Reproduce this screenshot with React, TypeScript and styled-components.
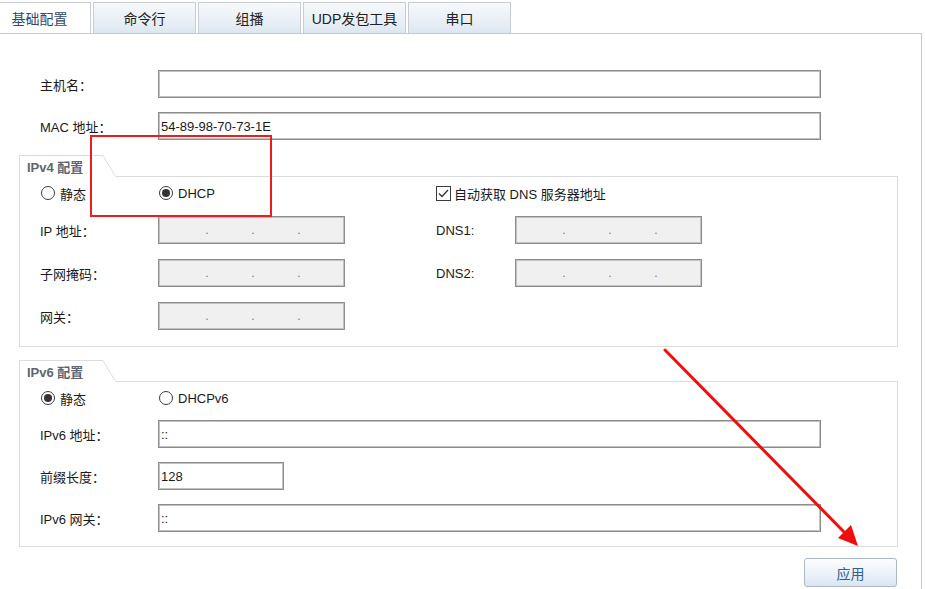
import React from "react";
import styled, { createGlobalStyle } from "styled-components";

const GlobalStyle = createGlobalStyle`
  html, body {
    margin: 0;
    padding: 0;
    background: #fff;
  }
  body {
    font-family: "Liberation Sans", "Noto Sans CJK SC", sans-serif;
    font-size: 13px;
    color: #1a1a1a;
  }
`;

const Page = styled.div`
  position: relative;
  width: 925px;
  height: 589px;
  overflow: hidden;
`;

const TabBar = styled.div`
  display: flex;
  gap: 2px;
  padding-top: 2px;
  width: 922px;
  border-bottom: 1px solid #c6c9cd;
`;

const Tab = styled.div<{ $active?: boolean }>`
  box-sizing: border-box;
  width: 103px;
  height: 31px;
  display: flex;
  align-items: center;
  justify-content: center;
  font-size: 14px;
  border: 1px solid #c9cdd2;
  border-bottom: none;
  color: ${(p) => (p.$active ? "#34496a" : "#222")};
  background: ${(p) =>
    p.$active ? "#fff" : "linear-gradient(#f7f9fb, #e6edf5 70%, #dde6f0)"};
  &:first-child {
    margin-left: -12px;
  }
`;

const Panel = styled.div`
  box-sizing: border-box;
  width: 922px;
  height: 555px;
  border-right: 1px solid #c6c9cd;
  padding-top: 36px;
`;

const TopFields = styled.div`
  display: flex;
  flex-direction: column;
  gap: 14px;
  margin-bottom: 15px;
`;

const Field = styled.div`
  display: grid;
  grid-template-columns: 118px auto;
  align-items: center;
  height: 28px;
  padding-left: 40px;
`;

const Label = styled.span`
  white-space: nowrap;
`;

const TextInput = styled.input<{ $width: number }>`
  box-sizing: border-box;
  width: ${(p) => p.$width}px;
  height: 28px;
  margin: 0;
  padding: 0 2px;
  border: 1px solid #8c8c8c;
  box-shadow: inset 0 0 0 1px #c2c2c2;
  font: inherit;
  font-size: 13px;
  color: #1a1a1a;
  background: #fff;
  outline: none;
`;

const IpBox = styled.div`
  box-sizing: border-box;
  width: 187px;
  height: 28px;
  display: flex;
  align-items: center;
  gap: 42px;
  padding-left: 46px;
  border: 1px solid #8c8c8c;
  box-shadow: inset 0 0 0 1px #c2c2c2;
  background: #f0f0f0;
  color: #7a7a7a;
  font-size: 12px;
`;

const Dot = styled.span`
  width: 4px;
  text-align: center;
`;

const Group = styled.div<{ $gap?: number }>`
  margin-left: 19px;
  width: 879px;
  margin-top: ${(p) => p.$gap ?? 0}px;
`;

const GroupHead = styled.div`
  display: flex;
  height: 22px;
`;

const LegendTab = styled.div`
  box-sizing: border-box;
  width: 84px;
  height: 22px;
  border-top: 1px solid #dcdcdc;
  border-left: 1px solid #dcdcdc;
  padding-left: 7px;
  display: flex;
  align-items: center;
  font-weight: bold;
  color: #5d6670;
`;

const Slant = styled.svg`
  display: block;
  flex: none;
`;

const HeadRest = styled.div`
  flex: 1;
  border-bottom: 1px solid #dcdcdc;
`;

const GroupBody = styled.div<{ $cols: string; $rowGap: number; $pb: number }>`
  display: grid;
  grid-template-columns: ${(p) => p.$cols};
  grid-template-rows: 16px 28px 28px 28px;
  row-gap: ${(p) => p.$rowGap}px;
  align-items: center;
  padding: 8px 0 ${(p) => p.$pb}px 20px;
  border: 1px solid #dcdcdc;
  border-top: none;
`;

const Choice = styled.label<{ $span?: string }>`
  display: inline-flex;
  align-items: center;
  gap: 5px;
  white-space: nowrap;
  grid-column: ${(p) => p.$span ?? "auto"};
`;

const RadioMark = styled.span<{ $on?: boolean }>`
  box-sizing: border-box;
  width: 14px;
  height: 14px;
  margin-left: 1px;
  border: 1px solid #3a3a3a;
  border-radius: 50%;
  display: flex;
  align-items: center;
  justify-content: center;
  background: #fff;
  &::after {
    content: "";
    width: 8px;
    height: 8px;
    border-radius: 50%;
    background: ${(p) => (p.$on ? "#333" : "transparent")};
  }
`;

const CheckMark = styled.span`
  box-sizing: border-box;
  width: 15px;
  height: 15px;
  margin-right: -2px;
  border: 1px solid #3a3a3a;
  display: flex;
  align-items: center;
  justify-content: center;
  background: #fff;
`;

const ButtonRow = styled.div`
  width: 879px;
  margin-left: 19px;
  margin-top: 11px;
  display: flex;
  justify-content: flex-end;
  padding-right: 1px;
  box-sizing: border-box;
`;

const ApplyButton = styled.button`
  box-sizing: border-box;
  width: 93px;
  height: 29px;
  border: 1px solid #aeb8c4;
  border-radius: 3px;
  background: linear-gradient(#fcfdfe, #e9f0f8 60%, #d9e5f2);
  color: #2f5f93;
  font: inherit;
  font-size: 14px;
  cursor: pointer;
`;

const Annotations = styled.svg`
  position: absolute;
  top: 0;
  left: 0;
  pointer-events: none;
`;

const tabs = ["基础配置", "命令行", "组播", "UDP发包工具", "串口"];

const Ip = () => (
  <IpBox>
    <Dot>.</Dot>
    <Dot>.</Dot>
    <Dot>.</Dot>
  </IpBox>
);

const Radio = ({ on, text, span }: { on?: boolean; text: string; span?: string }) => (
  <Choice $span={span}>
    <RadioMark $on={on} />
    {text}
  </Choice>
);

const Legend = ({ title }: { title: string }) => (
  <GroupHead>
    <LegendTab>{title}</LegendTab>
    <Slant width="13" height="22" viewBox="0 0 13 22">
      <line x1="0" y1="0.5" x2="12.5" y2="21.5" stroke="#dcdcdc" strokeWidth="1" />
    </Slant>
    <HeadRest />
  </GroupHead>
);

export default function App() {
  return (
    <Page>
      <GlobalStyle />
      <TabBar>
        {tabs.map((t, i) => (
          <Tab key={t} $active={i === 0}>
            {t}
          </Tab>
        ))}
      </TabBar>
      <Panel>
        <TopFields>
          <Field>
            <Label>主机名：</Label>
            <TextInput $width={663} defaultValue="" readOnly />
          </Field>
          <Field>
            <Label>MAC 地址：</Label>
            <TextInput $width={663} defaultValue="54-89-98-70-73-1E" readOnly />
          </Field>
        </TopFields>

        <Group>
          <Legend title="IPv4 配置" />
          <GroupBody $cols="118px 187px 91px 79px 187px" $rowGap={15} $pb={16}>
            <Radio text="静态" />
            <Radio on text="DHCP" />
            <span />
            <Choice $span="4 / span 2">
              <CheckMark>
                <svg width="11" height="9" viewBox="0 0 11 9">
                  <path d="M1 4.5 L4 7.5 L10 1" fill="none" stroke="#333" strokeWidth="1.3" />
                </svg>
              </CheckMark>
              自动获取 DNS 服务器地址
            </Choice>

            <Label>IP 地址：</Label>
            <Ip />
            <span />
            <Label>DNS1:</Label>
            <Ip />

            <Label>子网掩码：</Label>
            <Ip />
            <span />
            <Label>DNS2:</Label>
            <Ip />

            <Label>网关：</Label>
            <Ip />
          </GroupBody>
        </Group>

        <Group $gap={13}>
          <Legend title="IPv6 配置" />
          <GroupBody $cols="118px auto" $rowGap={14} $pb={14}>
            <Radio on text="静态" />
            <Radio text="DHCPv6" />

            <Label>IPv6 地址：</Label>
            <TextInput $width={663} defaultValue="::" readOnly />

            <Label>前缀长度：</Label>
            <TextInput $width={126} defaultValue="128" readOnly />

            <Label>IPv6 网关：</Label>
            <TextInput $width={663} defaultValue="::" readOnly />
          </GroupBody>
        </Group>

        <ButtonRow>
          <ApplyButton>应用</ApplyButton>
        </ButtonRow>
      </Panel>

      <Annotations width="925" height="589" viewBox="0 0 925 589">
        <rect x="91" y="136" width="180" height="80" fill="none" stroke="#ee1c1c" strokeWidth="2" />
        <line x1="665" y1="350" x2="848" y2="536" stroke="#f20d0d" strokeWidth="3" strokeLinecap="round" />
        <polygon points="858,546 838,538 851,525" fill="#f20d0d" />
      </Annotations>
    </Page>
  );
}
